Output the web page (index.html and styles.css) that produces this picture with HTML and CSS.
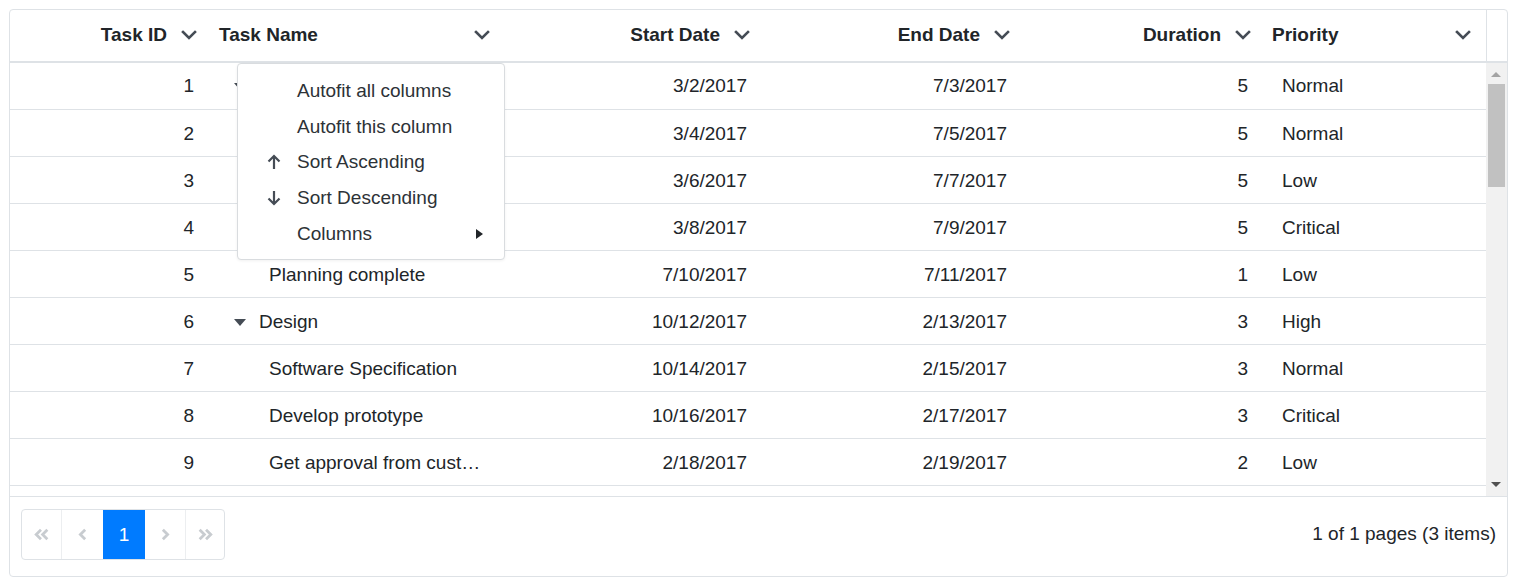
FILE: index.html
```html
<!DOCTYPE html>
<html>
<head>
<meta charset="utf-8">
<link rel="stylesheet" href="styles.css">
</head>
<body>
<div class="grid">
  <div class="header">
    <div class="hcell c-id right"><span class="htext">Task ID</span><svg class="chev" viewBox="0 0 16 10"><path d="M2 2 L8 8 L14 2" /></svg></div>
    <div class="hcell c-name left"><span class="htext">Task Name</span><svg class="chev" viewBox="0 0 16 10"><path d="M2 2 L8 8 L14 2" /></svg></div>
    <div class="hcell c-start right"><span class="htext">Start Date</span><svg class="chev" viewBox="0 0 16 10"><path d="M2 2 L8 8 L14 2" /></svg></div>
    <div class="hcell c-end right"><span class="htext">End Date</span><svg class="chev" viewBox="0 0 16 10"><path d="M2 2 L8 8 L14 2" /></svg></div>
    <div class="hcell c-dur right"><span class="htext">Duration</span><svg class="chev" viewBox="0 0 16 10"><path d="M2 2 L8 8 L14 2" /></svg></div>
    <div class="hcell c-pri left"><span class="htext">Priority</span><svg class="chev" viewBox="0 0 16 10"><path d="M2 2 L8 8 L14 2" /></svg></div>
    <div class="hpad"></div>
  </div>
  <div class="content">
    <div class="rows">
      <div class="row"><div class="cell c-id num">1</div><div class="cell c-name tree"><span class="caret"></span><span class="tname">Planning</span></div><div class="cell c-start num">3/2/2017</div><div class="cell c-end num">7/3/2017</div><div class="cell c-dur num">5</div><div class="cell c-pri">Normal</div></div>
      <div class="row"><div class="cell c-id num">2</div><div class="cell c-name child"><span class="tname">Plan timeline</span></div><div class="cell c-start num">3/4/2017</div><div class="cell c-end num">7/5/2017</div><div class="cell c-dur num">5</div><div class="cell c-pri">Normal</div></div>
      <div class="row"><div class="cell c-id num">3</div><div class="cell c-name child"><span class="tname">Plan budget</span></div><div class="cell c-start num">3/6/2017</div><div class="cell c-end num">7/7/2017</div><div class="cell c-dur num">5</div><div class="cell c-pri">Low</div></div>
      <div class="row"><div class="cell c-id num">4</div><div class="cell c-name child"><span class="tname">Allocate resources</span></div><div class="cell c-start num">3/8/2017</div><div class="cell c-end num">7/9/2017</div><div class="cell c-dur num">5</div><div class="cell c-pri">Critical</div></div>
      <div class="row"><div class="cell c-id num">5</div><div class="cell c-name child"><span class="tname">Planning complete</span></div><div class="cell c-start num">7/10/2017</div><div class="cell c-end num">7/11/2017</div><div class="cell c-dur num">1</div><div class="cell c-pri">Low</div></div>
      <div class="row"><div class="cell c-id num">6</div><div class="cell c-name tree"><span class="caret"></span><span class="tname">Design</span></div><div class="cell c-start num">10/12/2017</div><div class="cell c-end num">2/13/2017</div><div class="cell c-dur num">3</div><div class="cell c-pri">High</div></div>
      <div class="row"><div class="cell c-id num">7</div><div class="cell c-name child"><span class="tname">Software Specification</span></div><div class="cell c-start num">10/14/2017</div><div class="cell c-end num">2/15/2017</div><div class="cell c-dur num">3</div><div class="cell c-pri">Normal</div></div>
      <div class="row"><div class="cell c-id num">8</div><div class="cell c-name child"><span class="tname">Develop prototype</span></div><div class="cell c-start num">10/16/2017</div><div class="cell c-end num">2/17/2017</div><div class="cell c-dur num">3</div><div class="cell c-pri">Critical</div></div>
      <div class="row"><div class="cell c-id num">9</div><div class="cell c-name child"><span class="tname">Get approval from customer</span></div><div class="cell c-start num">2/18/2017</div><div class="cell c-end num">2/19/2017</div><div class="cell c-dur num">2</div><div class="cell c-pri">Low</div></div>
      <div class="row"><div class="cell c-id num">10</div><div class="cell c-name child"><span class="tname">Design complete</span></div><div class="cell c-start num">2/20/2017</div><div class="cell c-end num">2/21/2017</div><div class="cell c-dur num">0</div><div class="cell c-pri">Normal</div></div>
    </div>
    <div class="vscroll">
      <div class="sarrow up"></div>
      <div class="strack"><div class="sthumb"></div></div>
      <div class="sarrow down"></div>
    </div>
  </div>
  <div class="pager">
    <div class="pbox">
      <div class="pbtn"><svg viewBox="0 0 16 16"><path d="M7.5 3.5 L3 8 L7.5 12.5 M13.5 3.5 L9 8 L13.5 12.5" /></svg></div>
      <div class="pbtn"><svg viewBox="0 0 16 16"><path d="M10.5 3.5 L6 8 L10.5 12.5" /></svg></div>
      <div class="pbtn active">1</div>
      <div class="pbtn"><svg viewBox="0 0 16 16"><path d="M5.5 3.5 L10 8 L5.5 12.5" /></svg></div>
      <div class="pbtn"><svg viewBox="0 0 16 16"><path d="M2.5 3.5 L7 8 L2.5 12.5 M8.5 3.5 L13 8 L8.5 12.5" /></svg></div>
    </div>
    <div class="pinfo">1 of 1 pages (3 items)</div>
  </div>

  <div class="menu">
    <div class="mitem"><span class="micon"></span><span>Autofit all columns</span></div>
    <div class="mitem"><span class="micon"></span><span>Autofit this column</span></div>
    <div class="mitem"><span class="micon"><svg viewBox="0 0 16 16"><path d="M8 15 L8 2 M2.5 7.5 L8 2 L13.5 7.5" /></svg></span><span>Sort Ascending</span></div>
    <div class="mitem"><span class="micon"><svg viewBox="0 0 16 16"><path d="M8 1 L8 14 M2.5 8.5 L8 14 L13.5 8.5" /></svg></span><span>Sort Descending</span></div>
    <div class="mitem"><span class="micon"></span><span class="mlabel">Columns</span><span class="subcaret"></span></div>
  </div>
</div>
</body>
</html>
```

FILE: styles.css
```css
* { box-sizing: border-box; }
body {
  margin: 0;
  font-family: "Liberation Sans", Arial, sans-serif;
  color: #212529;
  background: #fff;
}
.grid {
  position: relative;
  margin: 9px 0 0 9px;
  width: 1499px;
  border: 1px solid #dee2e6;
  border-radius: 4px;
}
.header {
  display: flex;
  height: 53px;
  border-bottom: 2px solid #dee2e6;
}
.c-id { width: 197px; }
.c-name { width: 293px; }
.c-start { width: 260px; }
.c-end { width: 260px; }
.c-dur { width: 241px; }
.c-pri { width: 225px; }
.hcell {
  display: flex;
  align-items: center;
  font-size: 19px;
  font-weight: bold;
  padding-right: 10px;
  padding-bottom: 2px;
}
.hcell.right { justify-content: flex-end; }
.hcell.right .htext { margin-right: 14px; }
.hcell.left { padding-left: 12px; }
.hcell.c-pri { padding-left: 11px; padding-right: 15px; }
.hcell.left .htext { flex: 1; }
.chev {
  width: 16px;
  height: 10px;
  fill: none;
  stroke: #454c55;
  stroke-width: 2.6;
  stroke-linecap: square;
}
.hpad {
  width: 21px;
  border-left: 1px solid #dee2e6;
}
.content {
  display: flex;
  height: 434px;
  border-bottom: 1px solid #dee2e6;
  overflow: hidden;
}
.rows {
  width: 1476px;
  height: 433px;
  overflow: hidden;
}
.row {
  display: flex;
  height: 47px;
  border-bottom: 1px solid #dee2e6;
}
.cell {
  display: flex;
  align-items: center;
  font-size: 19px;
  white-space: nowrap;
  overflow: hidden;
  padding-top: 2px;
}
.row:first-child .cell { padding-top: 0; }
.cell.num { justify-content: flex-end; padding-right: 13px; }
.cell.c-pri { padding-left: 21px; }
.cell.tree { padding-left: 27px; }
.cell.child { padding-left: 62px; padding-right: 16px; }
.tname { overflow: hidden; text-overflow: ellipsis; }
.caret {
  width: 0;
  height: 0;
  border-left: 6.5px solid transparent;
  border-right: 6.5px solid transparent;
  border-top: 7px solid #454c55;
  margin-right: 13px;
  margin-top: 1px;
}
.vscroll {
  width: 21px;
  background: #f1f1f1;
  display: flex;
  flex-direction: column;
  align-items: center;
  padding-right: 1px;
}
.sarrow { width: 0; height: 0; }
.sarrow.up {
  margin-top: 9px;
  border-left: 5px solid transparent;
  border-right: 5px solid transparent;
  border-bottom: 5px solid #a3a3a3;
}
.strack { flex: 1; width: 100%; padding: 7px 1px 0 2px; }
.sthumb { height: 103px; background: #c1c1c1; }
.sarrow.down {
  margin-bottom: 9px;
  border-left: 5px solid transparent;
  border-right: 5px solid transparent;
  border-top: 5px solid #505050;
}
.pager {
  display: flex;
  align-items: flex-start;
  justify-content: space-between;
  height: 79px;
  padding: 12px 11px 0 11px;
}
.pbox {
  display: flex;
  height: 51px;
  border: 1px solid #dee2e6;
  border-radius: 4px;
  overflow: hidden;
}
.pbtn {
  width: 40px;
  display: flex;
  align-items: center;
  justify-content: center;
  border-left: 1px solid #eceef0;
}
.pbtn:first-child { border-left: none; width: 39px; }
.pbtn:nth-child(2) { width: 42px; }
.pbtn:last-child { width: 39px; }
.pbtn.active {
  width: 42px;
  background: #007bff;
  color: #fff;
  font-size: 19px;
  border-left: none;
}
.pbtn.active + .pbtn { border-left: none; }
.pbtn svg {
  width: 17px;
  height: 17px;
  fill: none;
  stroke: #c8ccd0;
  stroke-width: 2.6;
}
.pinfo {
  font-size: 19px;
  padding-top: 14px;
  padding-right: 0;
}
.menu {
  position: absolute;
  left: 227px;
  top: 53px;
  width: 268px;
  height: 197px;
  background: #fff;
  border: 1px solid #d9dcdf;
  border-radius: 4px;
  box-shadow: 0 1px 3px rgba(0,0,0,0.06);
  padding-top: 9px;
}
.mitem {
  display: flex;
  align-items: center;
  height: 35.8px;
  font-size: 19px;
  color: #2d3237;
  padding-left: 28px;
}
.micon {
  width: 31px;
  display: flex;
  align-items: center;
}
.micon svg {
  width: 16px;
  height: 16px;
  fill: none;
  stroke: #454c55;
  stroke-width: 2.2;
}
.mlabel { flex: 1; }
.subcaret {
  width: 0;
  height: 0;
  border-top: 5.5px solid transparent;
  border-bottom: 5.5px solid transparent;
  border-left: 7px solid #212529;
  margin-right: 21px;
}
```
